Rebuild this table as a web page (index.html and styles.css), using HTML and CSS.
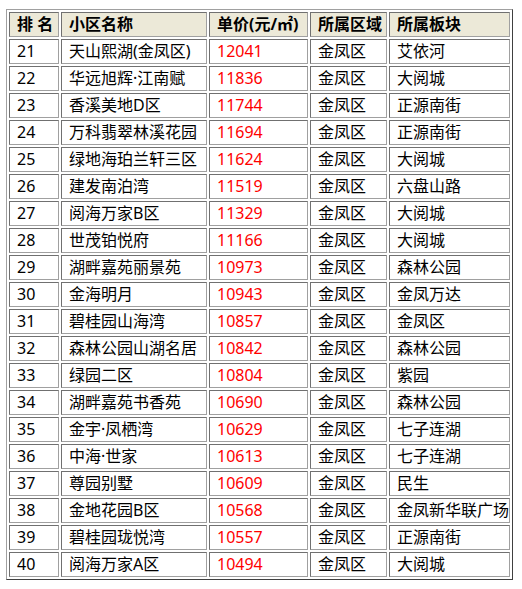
FILE: index.html
```html
<!DOCTYPE html>
<html lang="zh-CN">
<head>
<meta charset="utf-8">
<title>小区单价排名</title>
<link rel="stylesheet" href="styles.css">
</head>
<body>
<table class="rank">
  <thead>
    <tr>
      <th class="c-no">排 名</th>
      <th class="c-name">小区名称</th>
      <th class="c-price">单价(元/㎡)</th>
      <th class="c-area">所属区域</th>
      <th class="c-block">所属板块</th>
    </tr>
  </thead>
  <tbody>
    <tr><td>21</td><td>天山熙湖(金凤区)</td><td class="price">12041</td><td>金凤区</td><td>艾依河</td></tr>
    <tr><td>22</td><td>华远旭辉·江南赋</td><td class="price">11836</td><td>金凤区</td><td>大阅城</td></tr>
    <tr><td>23</td><td>香溪美地D区</td><td class="price">11744</td><td>金凤区</td><td>正源南街</td></tr>
    <tr><td>24</td><td>万科翡翠林溪花园</td><td class="price">11694</td><td>金凤区</td><td>正源南街</td></tr>
    <tr><td>25</td><td>绿地海珀兰轩三区</td><td class="price">11624</td><td>金凤区</td><td>大阅城</td></tr>
    <tr><td>26</td><td>建发南泊湾</td><td class="price">11519</td><td>金凤区</td><td>六盘山路</td></tr>
    <tr><td>27</td><td>阅海万家B区</td><td class="price">11329</td><td>金凤区</td><td>大阅城</td></tr>
    <tr><td>28</td><td>世茂铂悦府</td><td class="price">11166</td><td>金凤区</td><td>大阅城</td></tr>
    <tr><td>29</td><td>湖畔嘉苑丽景苑</td><td class="price">10973</td><td>金凤区</td><td>森林公园</td></tr>
    <tr><td>30</td><td>金海明月</td><td class="price">10943</td><td>金凤区</td><td>金凤万达</td></tr>
    <tr><td>31</td><td>碧桂园山海湾</td><td class="price">10857</td><td>金凤区</td><td>金凤区</td></tr>
    <tr><td>32</td><td>森林公园山湖名居</td><td class="price">10842</td><td>金凤区</td><td>森林公园</td></tr>
    <tr><td>33</td><td>绿园二区</td><td class="price">10804</td><td>金凤区</td><td>紫园</td></tr>
    <tr><td>34</td><td>湖畔嘉苑书香苑</td><td class="price">10690</td><td>金凤区</td><td>森林公园</td></tr>
    <tr><td>35</td><td>金宇·凤栖湾</td><td class="price">10629</td><td>金凤区</td><td>七子连湖</td></tr>
    <tr><td>36</td><td>中海·世家</td><td class="price">10613</td><td>金凤区</td><td>七子连湖</td></tr>
    <tr><td>37</td><td>尊园别墅</td><td class="price">10609</td><td>金凤区</td><td>民生</td></tr>
    <tr><td>38</td><td>金地花园B区</td><td class="price">10568</td><td>金凤区</td><td>金凤新华联广场</td></tr>
    <tr><td>39</td><td>碧桂园珑悦湾</td><td class="price">10557</td><td>金凤区</td><td>正源南街</td></tr>
    <tr><td>40</td><td>阅海万家A区</td><td class="price">10494</td><td>金凤区</td><td>大阅城</td></tr>
  </tbody>
</table>
</body>
</html>
```

FILE: styles.css
```css
html, body {
  margin: 0;
  padding: 0;
  background: #ffffff;
}

body {
  padding: 9px 0 0 6px;
  font-family: "Noto Sans", "Noto Sans CJK SC", sans-serif;
  font-size: 16px;
  color: #000000;
}

.rank {
  table-layout: fixed;
  width: 507px;
  border-collapse: separate;
  border-spacing: 2px;
  border-style: solid;
  border-width: 1px;
  border-color: #a0a0a0 #404040 #404040 #a0a0a0;
}

.rank th,
.rank td {
  box-sizing: border-box;
  height: 25px;
  padding: 0 0 0 7px;
  line-height: 23px;
  text-align: left;
  white-space: nowrap;
  overflow: hidden;
  border-style: solid;
  border-width: 1px;
  border-color: #707070 #a0a0a0 #a0a0a0 #707070;
}

.rank th {
  background: #ece9d8;
  font-weight: bold;
}

.c-no { width: 50px; }
.c-name { width: 146px; }
.c-price { width: 99px; }
.c-area { width: 77px; }
.c-block { width: 121px; }

.rank td.price {
  color: #ff0000;
}
```
